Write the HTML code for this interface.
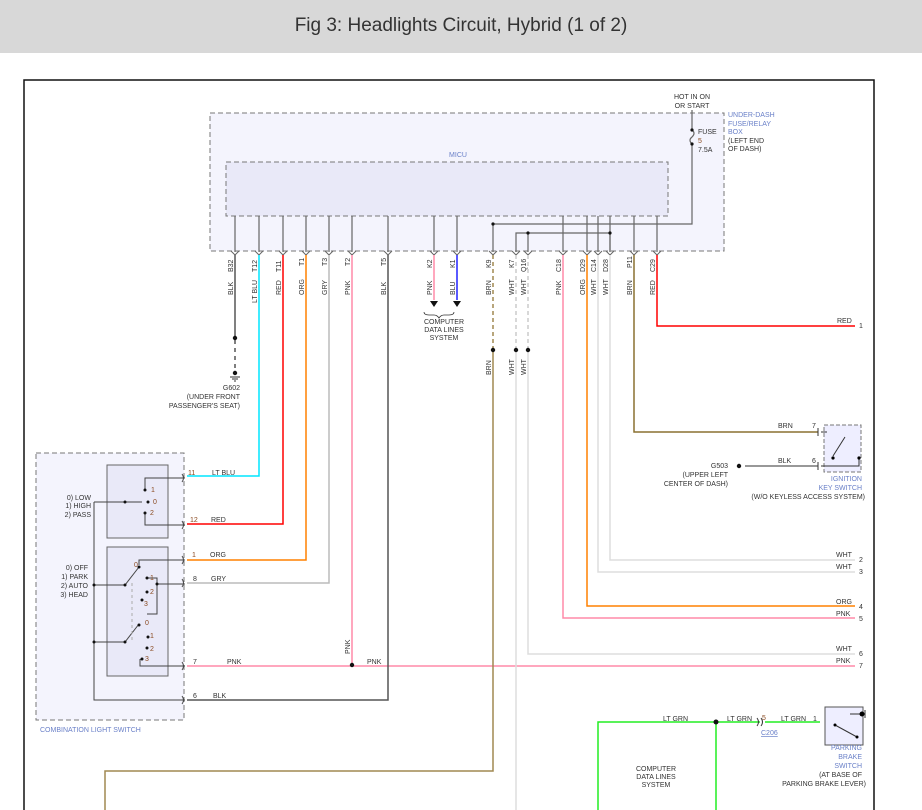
<!DOCTYPE html>
<html><head><meta charset="utf-8"><style>
html,body{margin:0;padding:0;background:#fff;width:922px;height:810px;overflow:hidden}
#hd{position:absolute;left:0;top:0;width:922px;height:53px;background:#d8d8d8;text-align:center;font:19px "Liberation Sans",sans-serif;color:#333;line-height:52px}
svg{position:absolute;left:0;top:0}
text{font-family:"Liberation Sans",sans-serif;font-size:7px;fill:#333}
.b{fill:#6a80c8}.n{fill:#8a4a20}
</style></head><body>
<div id="hd">Fig 3: Headlights Circuit, Hybrid (1 of 2)</div>
<svg width="922" height="810" viewBox="0 0 922 810">
<rect x="24" y="80" width="850" height="740" fill="none" stroke="#111" stroke-width="1.5"/>
<!-- boxes -->
<rect x="210" y="113" width="514" height="138" fill="#f4f4fd" stroke="#777" stroke-dasharray="5,3"/>
<rect x="226" y="162" width="442" height="54" fill="#e9e9f8" stroke="#777" stroke-dasharray="5,3"/>
<text x="458" y="157" class="b" text-anchor="middle">MICU</text>
<text x="692" y="99" text-anchor="middle">HOT IN ON</text><text x="692" y="108" text-anchor="middle">OR START</text>
<text x="728" y="117" class="b">UNDER-DASH</text><text x="728" y="126" class="b">FUSE/RELAY</text><text x="728" y="134" class="b">BOX</text>
<text x="728" y="143">(LEFT END</text><text x="728" y="151">OF DASH)</text>
<text x="698" y="134">FUSE</text><text x="698" y="143" class="n">5</text><text x="698" y="152">7.5A</text>
<g stroke="#666" fill="none" stroke-width="1.2">
<path d="M692 110V130M692 144v80H493M692 130q4 3 0 7q-4 3 0 7"/>
<path d="M516 252V233H610V252M528 233V252"/>
<path d="M493 224V252"/>
<path d="M235 216V252M259 216V252M283 216V252M306 216V252M329 216V252M352 216V252M388 216V252M434 216V252M457 216V252M563 216V252M587 216V252M598 216V252M610 216V252M634 216V252M657 216V252"/>
</g>
<g fill="#111"><circle cx="692" cy="130" r="1.6"/><circle cx="692" cy="144" r="1.6"/><circle cx="493" cy="224" r="1.6"/><circle cx="528" cy="233" r="1.6"/><circle cx="610" cy="233" r="1.6"/></g>
<g stroke="#666" fill="none">
<path d="M231 251l4 4 4-4M255 251l4 4 4-4M279 251l4 4 4-4M302 251l4 4 4-4M325 251l4 4 4-4M348 251l4 4 4-4M384 251l4 4 4-4M430 251l4 4 4-4M453 251l4 4 4-4M489 251l4 4 4-4M512 251l4 4 4-4M524 251l4 4 4-4M559 251l4 4 4-4M583 251l4 4 4-4M594 251l4 4 4-4M606 251l4 4 4-4M630 251l4 4 4-4M653 251l4 4 4-4"/>
</g>
<!-- wires -->
<g fill="none" stroke-width="1.5">
<path d="M235 255V337" stroke="#555"/><path d="M235 340V373" stroke="#555" stroke-dasharray="4,4"/>
<path d="M259 255V476H187" stroke="#00e5ff"/>
<path d="M283 255V524H187" stroke="#f00"/>
<path d="M306 255V560H187" stroke="#ff8000"/>
<path d="M329 255V583H187" stroke="#bbb"/>
<path d="M352 255V664" stroke="#ff8aa8"/>
<path d="M187 666H855" stroke="#ff8aa8"/>
<path d="M388 255V700H187" stroke="#555"/>
<path d="M434 255V300" stroke="#ff8aa8"/><path d="M457 255V300" stroke="#22f"/>
<path d="M493 255V350" stroke="#a08850" stroke-dasharray="4,3"/><path d="M493 350V771H105V810" stroke="#a08850"/>
<path d="M516 255V350M528 255V350" stroke="#ccc" stroke-dasharray="4,3"/>
<path d="M516 350V810M528 350V654H855" stroke="#ddd"/>
<path d="M563 255V618H855" stroke="#ff8aa8"/>
<path d="M587 255V606H855" stroke="#ff8000"/>
<path d="M598 255V572H855" stroke="#ddd"/>
<path d="M610 255V560H855" stroke="#ddd"/>
<path d="M634 255V432H818" stroke="#8a7030"/>
<path d="M657 255V326H855" stroke="#f00"/>
<path d="M745 466H818" stroke="#777"/>
<path d="M598 810V722H760M765 722H820M716 722V810" stroke="#2e2"/>
</g>
<g fill="#111"><circle cx="235" cy="338" r="2.2"/><circle cx="235" cy="373" r="2.2"/><circle cx="493" cy="350" r="2.2"/><circle cx="516" cy="350" r="2.2"/><circle cx="528" cy="350" r="2.2"/><circle cx="352" cy="665" r="2.2"/><circle cx="716" cy="722" r="2.5"/><circle cx="739" cy="466" r="2.2"/>
<path d="M430 301h8l-4 6zM453 301h8l-4 6z"/></g>
<path d="M230 377h10M232 379h6M234 381h2" stroke="#333"/>
<path d="M424 312q0 3 5 3h5q3 0 5 3q2-3 5-3h5q5 0 5-3" fill="none" stroke="#333" stroke-width=".8"/>
<text x="444" y="324" text-anchor="middle">COMPUTER</text><text x="444" y="332" text-anchor="middle">DATA LINES</text><text x="444" y="340" text-anchor="middle">SYSTEM</text>
<text x="240" y="390" text-anchor="end">G602</text><text x="240" y="399" text-anchor="end">(UNDER FRONT</text><text x="240" y="408" text-anchor="end">PASSENGER'S SEAT)</text>
<!-- rotated labels -->
<g>
<text transform="translate(233,272) rotate(-90)">B32</text><text transform="translate(233,295) rotate(-90)">BLK</text>
<text transform="translate(257,272) rotate(-90)">T12</text><text transform="translate(257,303) rotate(-90)">LT BLU</text>
<text transform="translate(281,272) rotate(-90)">T11</text><text transform="translate(281,295) rotate(-90)">RED</text>
<text transform="translate(304,266) rotate(-90)">T1</text><text transform="translate(304,295) rotate(-90)">ORG</text>
<text transform="translate(327,266) rotate(-90)">T3</text><text transform="translate(327,295) rotate(-90)">GRY</text>
<text transform="translate(350,266) rotate(-90)">T2</text><text transform="translate(350,295) rotate(-90)">PNK</text>
<text transform="translate(386,266) rotate(-90)">T5</text><text transform="translate(386,295) rotate(-90)">BLK</text>
<text transform="translate(432,268) rotate(-90)">K2</text><text transform="translate(432,295) rotate(-90)">PNK</text>
<text transform="translate(455,268) rotate(-90)">K1</text><text transform="translate(455,295) rotate(-90)">BLU</text>
<text transform="translate(491,268) rotate(-90)">K9</text><text transform="translate(491,295) rotate(-90)">BRN</text>
<text transform="translate(514,268) rotate(-90)">K7</text><text transform="translate(514,295) rotate(-90)">WHT</text>
<text transform="translate(526,272) rotate(-90)">Q16</text><text transform="translate(526,295) rotate(-90)">WHT</text>
<text transform="translate(561,272) rotate(-90)">C18</text><text transform="translate(561,295) rotate(-90)">PNK</text>
<text transform="translate(585,272) rotate(-90)">D29</text><text transform="translate(585,295) rotate(-90)">ORG</text>
<text transform="translate(596,272) rotate(-90)">C14</text><text transform="translate(596,295) rotate(-90)">WHT</text>
<text transform="translate(608,272) rotate(-90)">D28</text><text transform="translate(608,295) rotate(-90)">WHT</text>
<text transform="translate(632,268) rotate(-90)">P11</text><text transform="translate(632,295) rotate(-90)">BRN</text>
<text transform="translate(655,272) rotate(-90)">C29</text><text transform="translate(655,295) rotate(-90)">RED</text>
<text transform="translate(491,375) rotate(-90)">BRN</text><text transform="translate(514,375) rotate(-90)">WHT</text><text transform="translate(526,375) rotate(-90)">WHT</text>
<text transform="translate(350,654) rotate(-90)">PNK</text>
</g>
<!-- right side labels -->
<text x="837" y="323">RED</text><text x="859" y="328">1</text>
<text x="778" y="428">BRN</text><text x="812" y="428">7</text>
<text x="778" y="463">BLK</text><text x="812" y="463">6</text>
<text x="728" y="468" text-anchor="end">G503</text><text x="728" y="477" text-anchor="end">(UPPER LEFT</text><text x="728" y="486" text-anchor="end">CENTER OF DASH)</text>
<rect x="824" y="425" width="37" height="47" fill="#eef" stroke="#777" stroke-dasharray="4,2"/>
<path d="M818 428v8M818 462v8M821 432h6v0M821 466h38V458M845 437l-12 19" stroke="#333" fill="none"/>
<circle cx="833" cy="458" r="1.6"/><circle cx="859" cy="458" r="1.6"/>
<text x="862" y="481" class="b" text-anchor="end">IGNITION</text><text x="862" y="490" class="b" text-anchor="end">KEY SWITCH</text><text x="865" y="499" text-anchor="end">(W/O KEYLESS ACCESS SYSTEM)</text>
<text x="836" y="557">WHT</text><text x="859" y="562">2</text>
<text x="836" y="569">WHT</text><text x="859" y="574">3</text>
<text x="836" y="604">ORG</text><text x="859" y="609">4</text>
<text x="836" y="616">PNK</text><text x="859" y="621">5</text>
<text x="836" y="651">WHT</text><text x="859" y="656">6</text>
<text x="836" y="663">PNK</text><text x="859" y="668">7</text>
<text x="663" y="721">LT GRN</text><text x="727" y="721">LT GRN</text><text x="762" y="720" class="n">5</text><text x="781" y="721">LT GRN</text><text x="813" y="721">1</text>
<path d="M757 718q3 4 0 8M761 718q3 4 0 8" stroke="#333" fill="none"/>
<text x="761" y="735" text-decoration="underline" class="b">C206</text>
<rect x="825" y="707" width="38" height="38" fill="#eef" stroke="#555"/>
<path d="M835 725l22 12M850 714h12M865 710v8" stroke="#333" fill="none"/>
<circle cx="835" cy="725" r="1.5"/><circle cx="857" cy="737" r="1.5"/><circle cx="862" cy="714" r="2.5"/>
<text x="862" y="750" class="b" text-anchor="end">PARKING</text><text x="862" y="759" class="b" text-anchor="end">BRAKE</text><text x="862" y="768" class="b" text-anchor="end">SWITCH</text><text x="862" y="777" text-anchor="end">(AT BASE OF</text><text x="866" y="786" text-anchor="end">PARKING BRAKE LEVER)</text>
<text x="656" y="771" text-anchor="middle">COMPUTER</text><text x="656" y="779" text-anchor="middle">DATA LINES</text><text x="656" y="787" text-anchor="middle">SYSTEM</text>
<!-- combination switch -->
<rect x="36" y="453" width="148" height="267" fill="#f4f4fd" stroke="#777" stroke-dasharray="5,3"/>
<rect x="107" y="465" width="61" height="73" fill="#e9e9f8" stroke="#666"/>
<rect x="107" y="547" width="61" height="129" fill="#e9e9f8" stroke="#666"/>
<text x="40" y="732" class="b">COMBINATION LIGHT SWITCH</text>
<text x="91" y="500" text-anchor="end">0) LOW</text><text x="91" y="508" text-anchor="end">1) HIGH</text><text x="91" y="517" text-anchor="end">2) PASS</text>
<text x="88" y="570" text-anchor="end">0) OFF</text><text x="88" y="579" text-anchor="end">1) PARK</text><text x="88" y="588" text-anchor="end">2) AUTO</text><text x="88" y="597" text-anchor="end">3) HEAD</text>
<g stroke="#444" fill="none">
<path d="M185 478H145V490M185 525H145V513M94 502V700H185M94 502H142M94 585H125l14-18M139 565V560H185M147 578h10v36h-10M157 584H185M94 642H125l14-18M140 659v7H185"/>
<path d="M132 583V640" stroke-dasharray="3,3" stroke="#aaa"/>
</g>
<g fill="#111"><circle cx="145" cy="490" r="1.5"/><circle cx="125" cy="502" r="1.5"/><circle cx="148" cy="502" r="1.5"/><circle cx="145" cy="513" r="1.5"/>
<circle cx="139" cy="567" r="1.5"/><circle cx="147" cy="578" r="1.5"/><circle cx="147" cy="592" r="1.5"/><circle cx="142" cy="600" r="1.5"/><circle cx="125" cy="585" r="1.5"/><circle cx="157" cy="584" r="1.5"/>
<circle cx="94" cy="585" r="1.5"/><circle cx="94" cy="642" r="1.5"/>
<circle cx="139" cy="625" r="1.5"/><circle cx="148" cy="637" r="1.5"/><circle cx="147" cy="648" r="1.5"/><circle cx="142" cy="659" r="1.5"/><circle cx="125" cy="642" r="1.5"/></g>
<g class="n"><text x="151" y="492" class="n">1</text><text x="153" y="504" class="n">0</text><text x="150" y="515" class="n">2</text>
<text x="134" y="567" class="n">0</text><text x="150" y="580" class="n">1</text><text x="150" y="594" class="n">2</text><text x="144" y="606" class="n">3</text>
<text x="145" y="625" class="n">0</text><text x="150" y="638" class="n">1</text><text x="150" y="651" class="n">2</text><text x="145" y="661" class="n">3</text></g>
<g stroke="#444" fill="none"><path d="M182 474q3 4 0 8M182 521q3 4 0 8M182 556q3 4 0 8M182 579q3 4 0 8M182 662q3 4 0 8M182 696q3 4 0 8"/></g>
<text x="188" y="475" class="n">11</text><text x="212" y="475">LT BLU</text>
<text x="190" y="522" class="n">12</text><text x="211" y="522">RED</text>
<text x="192" y="557" class="n">1</text><text x="210" y="557">ORG</text>
<text x="193" y="581">8</text><text x="211" y="581">GRY</text>
<text x="193" y="664">7</text><text x="227" y="664">PNK</text><text x="367" y="664">PNK</text>
<text x="193" y="698">6</text><text x="213" y="698">BLK</text>
</svg>
</body></html>
